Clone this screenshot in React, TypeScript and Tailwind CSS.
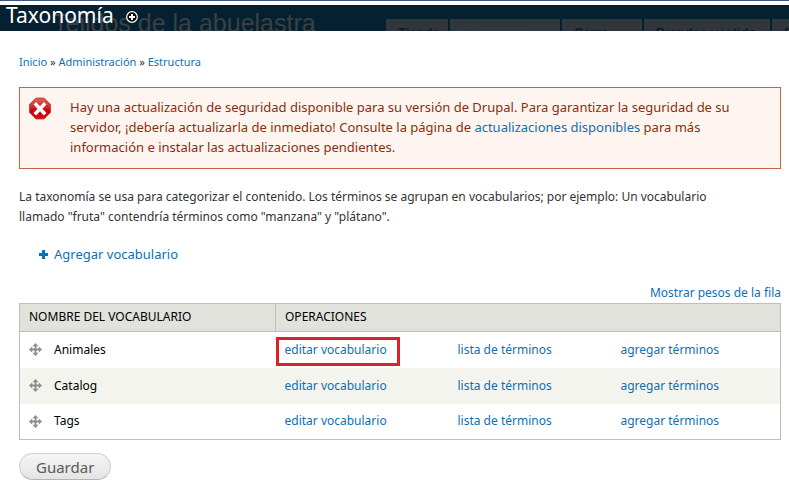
import React from 'react';

const tabs = [
  { label: 'Tienda', className: 'w-[62px] text-[#0d1a24]' },
  { label: 'Subscripciones', className: 'w-[110px] text-[#29394a]' },
  { label: 'Carro', className: 'w-[80px] text-[#0d1a24]' },
  { label: 'Prendas vestido', className: 'w-[126px] text-[#0d1a24]' },
  { label: 'Foro', className: 'w-[80px] text-[#0d1a24]' },
];

const vocabularies = [
  { name: 'Animales', highlighted: true },
  { name: 'Catalog', highlighted: false },
  { name: 'Tags', highlighted: false },
];

const linkClass = 'text-[#0f6fb0] hover:underline';

const ErrorIcon = () => (
  <svg width="24" height="24" viewBox="0 0 24 24" className="shrink-0" aria-hidden="true">
    <defs>
      <linearGradient id="error-fill" x1="0" y1="0" x2="0" y2="1">
        <stop offset="0" stopColor="#e0605c" />
        <stop offset="0.45" stopColor="#d0292b" />
        <stop offset="0.55" stopColor="#c40a10" />
        <stop offset="1" stopColor="#dc0a12" />
      </linearGradient>
    </defs>
    <path d="M8 1h8l6.500 6.500v8L16 22H8l-6.500-6.500v-8z" fill="url(#error-fill)" stroke="#c4302f" strokeWidth="0.8" strokeLinejoin="round" />
    <path d="M8 7.500l8 8.500M16 7.500l-8 8.500" stroke="#fff" strokeWidth="3.400" strokeLinecap="square" />
  </svg>
);

const DragIcon = () => (
  <svg width="13" height="13" viewBox="0 0 13 13" aria-hidden="true">
    <path d="M6.500 2v9M2 6.500h9" stroke="#8c8c8c" strokeWidth="1.800" />
    <path d="M6.500 0l3 3.200h-6zM6.500 13l3-3.200h-6zM0 6.500l3.200-3v6zM13 6.500l-3.200-3v6z" fill="#8c8c8c" />
  </svg>
);

const PlusIcon = () => (
  <svg width="9" height="9" viewBox="0 0 9 9" aria-hidden="true">
    <path d="M4.500 0v9M0 4.500h9" stroke="#0074bd" strokeWidth="3" />
  </svg>
);

const AddShortcutIcon = () => (
  <svg width="12" height="12" viewBox="0 0 12 12" aria-hidden="true">
    <circle cx="6" cy="6" r="5.300" fill="#0a0a0a" stroke="#fff" strokeWidth="1.200" />
    <path d="M6 3v6M3 6h6" stroke="#fff" strokeWidth="2" />
  </svg>
);

const Header = () => (
  <header className="border-t border-[#3d5580] pt-1">
    <div className="relative h-[26px] bg-[#052131]">
      {/* dimmed site header showing through the overlay */}
      <div className="absolute inset-0 flex items-start overflow-hidden pl-[53px]" aria-hidden="true">
        <span className="w-[333px] shrink-0 whitespace-nowrap pt-1 font-['Liberation_Sans'] text-[25px] leading-[28px] text-[#3a4043]">
          Tejidos de la abuelastra
        </span>
        <div className="flex shrink-0 gap-[2px] pt-[14px]">
          {tabs.map((tab) => (
            <span
              key={tab.label}
              className={`h-5 shrink-0 overflow-hidden whitespace-nowrap bg-[#30373c] pl-3 pt-1.5 font-['Liberation_Sans'] text-[13px] leading-4 font-bold ${tab.className}`}
            >
              {tab.label}
            </span>
          ))}
        </div>
      </div>
      <div className="relative flex items-center gap-3 pl-1.5">
        <h1 className="-mt-1 text-[21px] leading-7 text-white">Taxonomía</h1>
        <button type="button" aria-label="Agregar a los accesos directos">
          <AddShortcutIcon />
        </button>
      </div>
    </div>
  </header>
);

const App: React.FC = () => {
  return (
    <div className="bg-white font-['Noto_Sans',sans-serif] text-[12px] leading-5 text-[#333]">
      <Header />

      <main className="pl-[19px] pr-2">
        <nav aria-label="Ruta" className="mt-[21px] text-[11px]">
          <a href="#inicio" className={linkClass}>Inicio</a> »{' '}
          <a href="#administracion" className={linkClass}>Administración</a> »{' '}
          <a href="#estructura" className={linkClass}>Estructura</a>
        </nav>

        <div role="alert" className="mt-[15px] flex items-start gap-[18px] border border-[#c5654c] bg-[#fef5f1] py-[9px] pl-2 text-[13px] text-[#8c2e0b]">
          <ErrorIcon />
          <p className="pb-[2px]">
            Hay una actualización de seguridad disponible para su versión de Drupal. Para garantizar la seguridad de su
            <br />
            servidor, ¡debería actualizarla de inmediato! Consulte la página de{' '}
            <a href="#actualizaciones" className={linkClass}>actualizaciones disponibles</a> para más
            <br />
            información e instalar las actualizaciones pendientes.
          </p>
        </div>

        <p className="mt-[18px]">
          La taxonomía se usa para categorizar el contenido. Los términos se agrupan en vocabularios; por ejemplo: Un vocabulario
          <br />
          llamado "fruta" contendría términos como "manzana" y "plátano".
        </p>

        <a href="#agregar" className={`mt-[17px] ml-5 flex w-fit items-center gap-1.5 text-[13px] ${linkClass}`}>
          <PlusIcon />
          Agregar vocabulario
        </a>

        <div className="mt-[19px] text-right">
          <button type="button" className={linkClass}>Mostrar pesos de la fila</button>
        </div>

        <table className="w-full table-fixed border border-[#bebfb9] text-black">
          <colgroup>
            <col className="w-[256px]" />
            <col className="w-[173px]" />
            <col className="w-[163px]" />
            <col />
          </colgroup>
          <thead>
            <tr className="h-[28px] border-b border-[#bebfb9] bg-[#e1e2dc] text-left uppercase">
              <th className="border-r border-[#bebfb9] pb-[2px] pl-[9px] font-normal">Nombre del vocabulario</th>
              <th colSpan={3} className="pb-[2px] pl-[9px] font-normal">Operaciones</th>
            </tr>
          </thead>
          <tbody>
            {vocabularies.map((vocabulary) => (
              <tr key={vocabulary.name} className="h-9 even:bg-[#f3f4ee]">
                <td className="pl-[9px]">
                  <div className="flex items-center gap-3">
                    <DragIcon />
                    {vocabulary.name}
                  </div>
                </td>
                <td className="relative pl-[9px]">
                  <a href="#editar" className={linkClass}>editar vocabulario</a>
                  {vocabulary.highlighted && (
                    <span className="pointer-events-none absolute top-[5px] left-0 h-[29px] w-[124px] border-3 border-[#d9222a]" />
                  )}
                </td>
                <td className="pl-[9px]">
                  <a href="#lista" className={linkClass}>lista de términos</a>
                </td>
                <td className="pl-[9px]">
                  <a href="#terminos" className={linkClass}>agregar términos</a>
                </td>
              </tr>
            ))}
          </tbody>
        </table>

        <button
          type="button"
          className="mt-[13px] h-[27px] rounded-full border border-[#cfcfcf] border-b-[#b4b4b4] bg-linear-to-b from-[#f5f5f5] to-[#e4e4e4] px-4 text-[15px] text-[#5a5a5a]"
        >
          Guardar
        </button>
      </main>
    </div>
  );
};

export default App;
